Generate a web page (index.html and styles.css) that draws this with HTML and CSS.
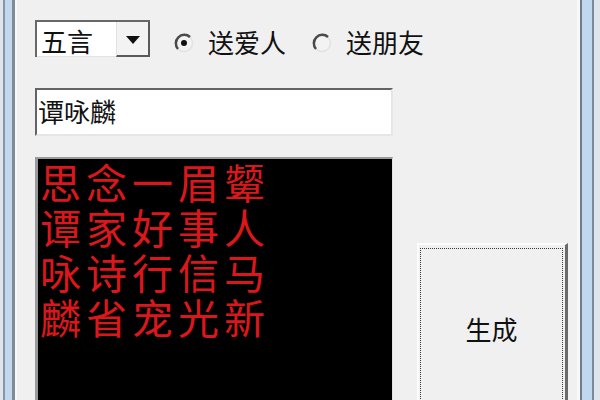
FILE: index.html
```html
<!DOCTYPE html>
<html lang="zh-CN">
<head>
<meta charset="utf-8">
<title>藏头诗</title>
<link rel="stylesheet" href="styles.css">
</head>
<body>
<div class="window">
  <div class="frame-left"></div>
  <div class="client">
    <div class="row-top">
      <div class="combo">
        <div class="combo-text">五言</div>
        <div class="combo-btn">
          <svg width="16" height="10" viewBox="0 0 16 10"><polygon points="1,1 15,1 8,9" fill="#111"/></svg>
        </div>
      </div>
      <div class="radio">
        <svg class="radio-mark" width="22" height="22" viewBox="0 0 22 22">
          <circle cx="11" cy="11" r="8.5" fill="#f3f3f3" stroke="#e2e2e2" stroke-width="1.5"/>
          <path d="M5 17 A8.5 8.5 0 0 1 17 5" fill="none" stroke="#4a4a4a" stroke-width="2.5"/>
          <circle cx="11" cy="11" r="3" fill="#111"/>
        </svg>
        <span class="radio-label">送爱人</span>
      </div>
      <div class="radio">
        <svg class="radio-mark" width="22" height="22" viewBox="0 0 22 22">
          <circle cx="11" cy="11" r="8.5" fill="#f3f3f3" stroke="#e2e2e2" stroke-width="1.5"/>
          <path d="M5 17 A8.5 8.5 0 0 1 17 5" fill="none" stroke="#4a4a4a" stroke-width="2.5"/>
        </svg>
        <span class="radio-label">送朋友</span>
      </div>
    </div>
    <div class="textbox">谭咏麟</div>
    <div class="row-bottom">
      <div class="poem">
        <div class="poem-line">思念一眉颦</div>
        <div class="poem-line">谭家好事人</div>
        <div class="poem-line">咏诗行信马</div>
        <div class="poem-line">麟省宠光新</div>
      </div>
      <div class="button">
        <div class="button-focus">生成</div>
      </div>
    </div>
  </div>
  <div class="frame-right"></div>
</div>
</body>
</html>
```
FILE: styles.css
```css
html, body {
  margin: 0;
  padding: 0;
  height: 100%;
  overflow: hidden;
  background: #f0f0f0;
  font-family: "Noto Sans CJK SC", "Noto Sans", sans-serif;
  color: #111;
}

.window {
  display: flex;
  height: 400px;
}

.frame-left {
  width: 17px;
  flex: none;
  background: linear-gradient(to right,
    #dfe5ec 0 3px, #8a96a3 3px 5px, #c3d8ee 5px 12px,
    #7f8b97 12px 15px, #f9f9f9 15px 17px);
}

.frame-right {
  width: 20px;
  flex: none;
  background: linear-gradient(to right,
    #6f7d8b 0 2px, #bfd7ef 2px 12px, #7d8996 12px 14px, #dde4ec 14px 20px);
}

.client {
  flex: 1;
  background: #f0f0f0;
  border-right: 3px solid #f9f9f9;
  padding: 20px 0 0 18px;
  box-sizing: border-box;
  overflow: hidden;
}

.row-top {
  display: flex;
  align-items: flex-start;
  height: 37px;
}

.combo {
  display: flex;
  width: 115px;
  height: 37px;
  box-sizing: border-box;
  border-top: 2px solid #686868;
  border-left: 2px solid #686868;
}

.combo-text {
  flex: 1;
  background: #fff;
  border-bottom: 1px solid #e3e3e3;
  padding: 5px 0 0 4px;
  font-size: 26px;
  line-height: 28px;
}

.combo-btn {
  width: 34px;
  box-sizing: border-box;
  background: #f3f3f3;
  border-left: 1px solid #e2e2e2;
  border-right: 2px solid #5a5a5a;
  border-bottom: 2px solid #5a5a5a;
  display: flex;
  align-items: center;
  justify-content: center;
  padding-top: 2px;
}

.radio {
  display: flex;
  align-items: center;
  height: 30px;
  margin-top: 7px;
  margin-left: 23px;
}

.radio + .radio {
  margin-left: 25px;
}

.radio-mark {
  flex: none;
  margin-top: 1px;
}

.radio-label {
  margin-left: 13px;
  font-size: 26px;
  line-height: 30px;
}

.textbox {
  margin-top: 31px;
  width: 358px;
  height: 48px;
  box-sizing: border-box;
  background: #fff;
  border-top: 2px solid #646464;
  border-left: 2px solid #646464;
  border-right: 2px solid #e6e6e6;
  border-bottom: 2px solid #e6e6e6;
  padding: 6px 0 0 1px;
  font-size: 26px;
  line-height: 30px;
}

.row-bottom {
  display: flex;
  align-items: flex-start;
  margin-top: 21px;
  gap: 24px;
}

.poem {
  width: 358px;
  height: 260px;
  box-sizing: border-box;
  background: #000;
  border-top: 2px solid #9a9a9a;
  border-left: 3px solid #9a9a9a;
  border-right: 1px solid #e2e2e2;
  padding: 0 0 0 2px;
  color: #dc171c;
  font-size: 41px;
  line-height: 45px;
  letter-spacing: 5px;
}

.button {
  margin-top: 86px;
  width: 151px;
  height: 166px;
  box-sizing: border-box;
  background: #f0f0f0;
  border-top: 2px solid #fcfcfc;
  border-left: 2px solid #fcfcfc;
  border-right: 3px solid #6a6a6a;
  padding: 3px 2px 0 1px;
  display: flex;
}

.button-focus {
  flex: 1;
  border: 1px dotted #3a3a3a;
  display: flex;
  align-items: center;
  justify-content: center;
  font-size: 26px;
  line-height: 30px;
}
```
